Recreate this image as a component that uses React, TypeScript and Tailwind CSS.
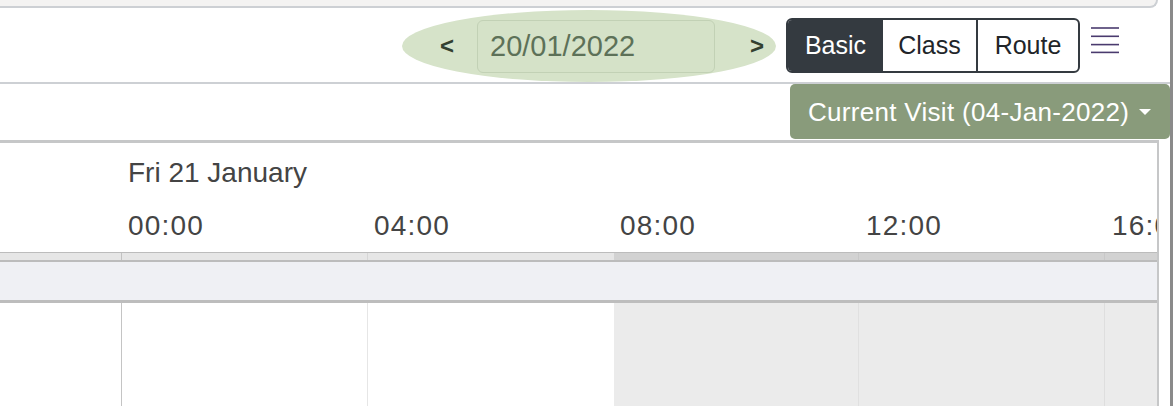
const hours = ["00:00", "04:00", "08:00", "12:00", "16:00"];

const Hamburger = () => (
    <svg width="30" height="27" viewBox="0 0 30 27" className="block">
        {[1, 9.3, 17.6, 25.4].map((y) => (
            <line key={y} x1="1" x2="29" y1={y} y2={y} stroke="#4a3a6e" strokeWidth="1.6" />
        ))}
    </svg>
);

const App: React.FC = () => {
    return (
        <div className="w-[1176px] h-[406px] overflow-hidden bg-white flex font-['Liberation_Sans',Arial,sans-serif]">
            <div className="w-[1170px] shrink-0 flex flex-col">
                {/* bottom of the card above */}
                <div className="flex h-[8px]">
                    <div className="w-[1158px] h-[8px] bg-[#f4f3f2] border-b-2 border-r-2 border-[#cdd0d4] rounded-br-[8px]"></div>
                </div>

                {/* toolbar */}
                <div className="h-[76px] border-b-2 border-[#cdd0d4] flex items-center justify-end pr-[50px]">
                    <div className="w-[374px] h-[72px] mt-[2px] rounded-[50%] bg-[#d6e3c9] flex items-center">
                        <span className="ml-[38px] w-[14px] text-[24px] font-bold text-[#33402f] leading-none">&lt;</span>
                        <div className="ml-[23px] w-[238px] h-[53px] rounded-[6px] border border-[#c2d1b5] bg-[#d5e2c8] flex items-center pl-[12px] text-[29px] text-[#5d7158] leading-none">
                            20/01/2022
                        </div>
                        <span className="ml-[35px] w-[14px] text-[24px] font-bold text-[#33402f] leading-none">&gt;</span>
                    </div>
                    <div className="ml-[10px] h-[55px] flex border-2 border-[#343a40] rounded-[6px] overflow-hidden text-[25px] leading-none">
                        <div className="w-[95px] bg-[#343a40] text-white flex items-center justify-center">Basic</div>
                        <div className="w-[95px] text-[#212529] flex items-center justify-center border-r-2 border-[#343a40]">Class</div>
                        <div className="w-[100px] text-[#212529] flex items-center justify-center">Route</div>
                    </div>
                    <div className="ml-[10px] self-start mt-[19px]">
                        <Hamburger />
                    </div>
                </div>

                {/* visit selector */}
                <div className="h-[56px] flex justify-end">
                    <div className="w-[380px] h-[55px] rounded-[5px] bg-[#899b7b] text-white text-[26px] leading-none flex items-center pl-[18px]">
                        <span className="tracking-[0.3px]">Current Visit (04-Jan-2022)</span>
                        <span className="ml-[10px] w-0 h-0 border-l-[6px] border-r-[6px] border-t-[6px] border-l-transparent border-r-transparent border-t-white"></span>
                    </div>
                </div>

                {/* timeline */}
                <div className="w-[1159px] flex-1 border-t-[3px] border-r-2 border-[#c6c7c8] overflow-hidden flex flex-col">
                    <div className="h-[109px] shrink-0 flex flex-col text-[#444] text-[28px] leading-none">
                        <div className="pl-[128px] pt-[16px]">Fri 21 January</div>
                        <div className="flex pt-[25px]">
                            <div className="w-[122px] shrink-0"></div>
                            {hours.map((h) => (
                                <div key={h} className="w-[246px] shrink-0 pl-[6px] tracking-[1.2px]">{h}</div>
                            ))}
                        </div>
                    </div>

                    <div className="h-[10px] shrink-0 flex border-t border-b-2 border-[#bcbcbc]">
                        <div className="w-[122px] shrink-0 bg-[#e6e6e6] border-r border-[#c2c2c2]"></div>
                        <div className="w-[246px] shrink-0 bg-[#e6e6e6] border-r border-[#d6d6d6]"></div>
                        <div className="w-[246px] shrink-0 bg-[#e6e6e6]"></div>
                        <div className="w-[245px] shrink-0 bg-[#d2d2d2] border-r border-[#c8c8c8]"></div>
                        <div className="w-[246px] shrink-0 bg-[#d2d2d2] border-r border-[#c8c8c8]"></div>
                        <div className="w-[246px] shrink-0 bg-[#d2d2d2]"></div>
                    </div>

                    <div className="h-[41px] shrink-0 bg-[#eff0f4] border-b-[3px] border-[#bdbdbd]"></div>

                    <div className="flex-1 flex">
                        <div className="w-[122px] shrink-0 bg-white border-r border-[#c4c4c4]"></div>
                        <div className="w-[246px] shrink-0 bg-white border-r border-[#e6e6e6]"></div>
                        <div className="w-[246px] shrink-0 bg-white"></div>
                        <div className="w-[245px] shrink-0 bg-[#ebebeb] border-r border-[#e0e0e0]"></div>
                        <div className="w-[246px] shrink-0 bg-[#ebebeb] border-r border-[#dedede]"></div>
                        <div className="w-[246px] shrink-0 bg-[#ebebeb]"></div>
                    </div>
                </div>
            </div>
            <div className="w-[3px] shrink-0 bg-[#8a8a8a]"></div>
            <div className="flex-1 bg-white"></div>
        </div>
    );
};

export default App;
